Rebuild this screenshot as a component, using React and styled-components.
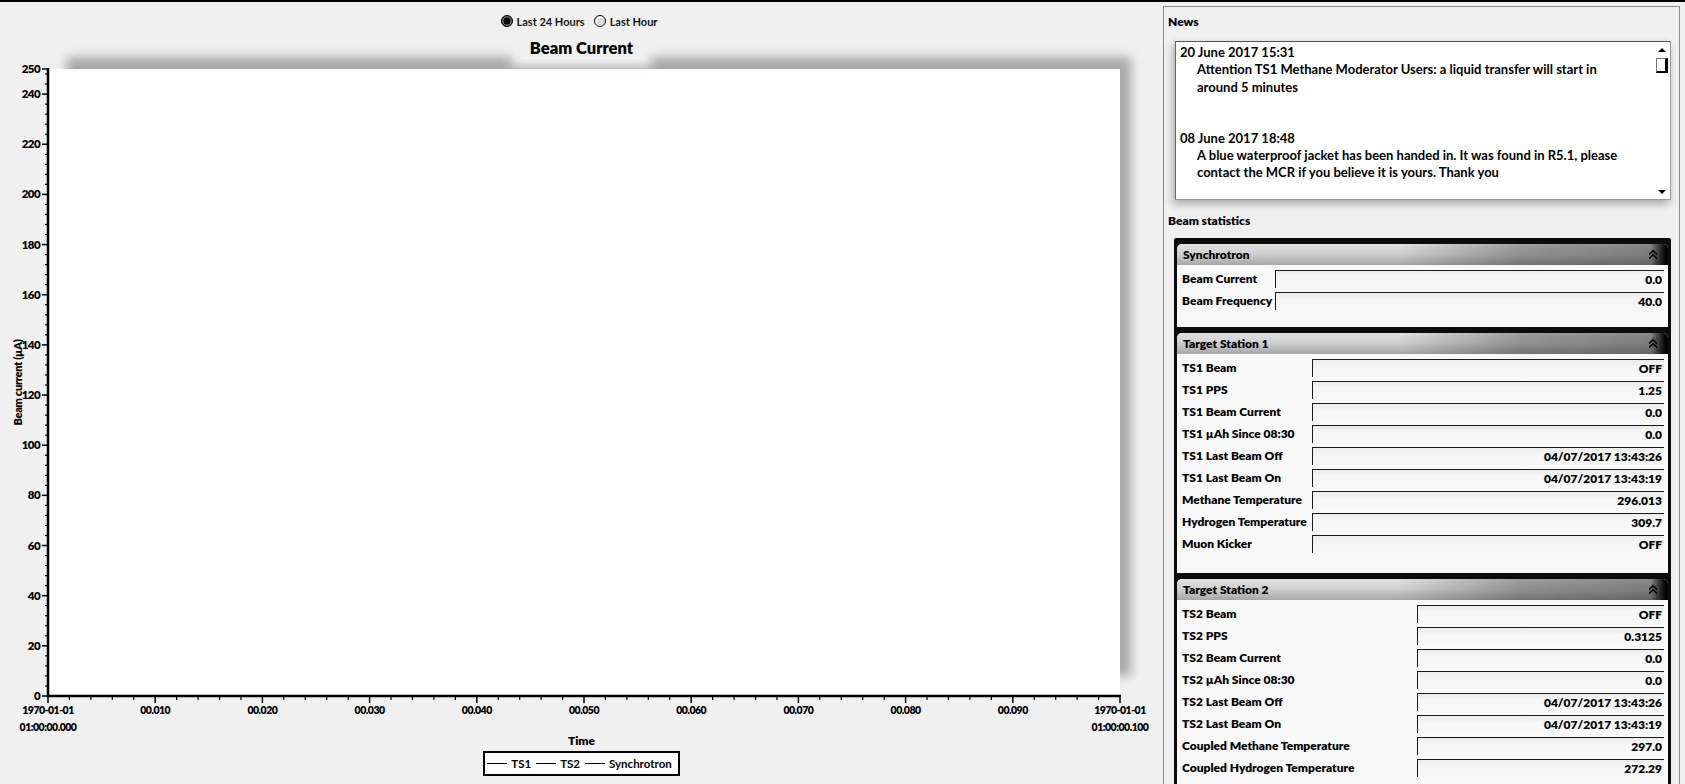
import React from 'react';
import styled, { createGlobalStyle } from 'styled-components';

const GlobalStyle = createGlobalStyle`
  html, body { margin: 0; padding: 0; background: #f0f0f0; }
  body { font-family: Lato, "Noto Sans", sans-serif; color: #000; }
  * { box-sizing: border-box; }
`;

const Window = styled.div`
  width: 1685px;
  height: 784px;
  border-top: 2px solid #000;
  display: flex;
  overflow: hidden;
  background: #f0f0f0;
`;

const ChartArea = styled.div`
  width: 1163px;
  flex: none;
  display: flex;
  flex-direction: column;
  align-items: center;
  padding-top: 11px;
`;

const RadioRow = styled.div`
  display: flex;
  align-items: center;
  height: 16px;
  gap: 4px;
  font-size: 11px;
  font-weight: 700;
`;

const RadioLabel = styled.label`
  display: flex;
  align-items: center;
  gap: 4px;
  margin-right: 5px;
`;

const RadioDot = styled.span`
  width: 12px;
  height: 12px;
  border-radius: 50%;
  border: 1.5px solid #000;
  background: ${(p) => (p.$checked ? '#000' : '#d8d8d8')};
  box-shadow: ${(p) => (p.$checked ? 'inset 0 0 0 1.5px #777' : 'inset 1px 1px 0 1px #fff')};
`;

const Title = styled.div`
  position: relative;
  z-index: 1;
  margin-top: 9px;
  margin-bottom: 10px;
  padding: 0 10px;
  font-size: 16.5px;
  font-weight: 800;
  line-height: 21px;
  background: #f0f0f0;
  box-shadow: 0 0 10px 8px #f0f0f0;
`;

const PlotRow = styled.div`
  position: relative;
  align-self: stretch;
  height: 665px;
`;

const PlotBox = styled.div`
  margin-left: 48px;
  width: 1072px;
  height: 627px;
  background: #fff;
  box-shadow: 15px -16px 10px -4px rgba(0, 0, 0, 0.3);
`;

const AxisSvg = styled.svg`
  position: absolute;
  left: 0;
  top: 0;
  overflow: visible;
  font-family: Lato, "Noto Sans", sans-serif;
  font-weight: 800;
`;

const AxisTitle = styled.div`
  font-size: 12px;
  font-weight: 800;
  line-height: 14px;
`;

const Legend = styled.div`
  margin-top: 3px;
  height: 25px;
  display: flex;
  align-items: center;
  gap: 5px;
  padding: 0 6px 0 2px;
  border: 2px solid #000;
  background: #fff;
  font-size: 11.5px;
  font-weight: 700;
`;

const LegendItem = styled.span`
  display: flex;
  align-items: center;
  gap: 4px;
  &::before {
    content: '';
    width: 20px;
    height: 1px;
    background: #000;
  }
`;

const SidePanel = styled.div`
  flex: none;
  width: 517px;
  margin-top: 4px;
  border: 1px solid #8a8a8a;
  border-bottom: none;
  padding-top: 7px;
  display: flex;
  flex-direction: column;
`;

const SectionLabel = styled.div`
  margin-left: 4px;
  margin-top: ${(p) => p.$mt || 0}px;
  font-size: 12px;
  font-weight: 800;
  line-height: 15px;
`;

const NewsBox = styled.div`
  margin: 12px 0 0 11px;
  width: 496px;
  height: 159px;
  flex: none;
  display: flex;
  background: #fff;
  border: 1px solid #9a9a9a;
  border-top-color: #555;
  border-left-color: #666;
  box-shadow: -2px 4px 8px rgba(0, 0, 0, 0.3);
`;

const NewsContent = styled.div`
  flex: 1;
  padding: 2px 4px;
  font-size: 13px;
  font-weight: 700;
  line-height: 17.3px;
  overflow: hidden;
`;

const NewsEntry = styled.div`
  margin-bottom: 34px;
`;

const NewsBody = styled.div`
  padding-left: 17px;
`;

const ScrollBar = styled.div`
  width: 16px;
  display: flex;
  flex-direction: column;
  align-items: center;
  padding: 6px 0 5px;
`;

const Arrow = styled.span`
  width: 0;
  height: 0;
  border-left: 4px solid transparent;
  border-right: 4px solid transparent;
  ${(p) => (p.$down ? 'border-top: 4px solid #000;' : 'border-bottom: 4px solid #000;')}
  margin-top: ${(p) => (p.$down ? 'auto' : '0')};
`;

const Thumb = styled.span`
  margin-top: 6px;
  width: 12px;
  height: 15px;
  background: #fff;
  border: 1px solid #777;
  border-right: 3px solid #000;
  border-bottom: 2px solid #000;
`;

const StatsFrame = styled.div`
  margin: 10px 0 0 10px;
  width: 497px;
  flex: 1;
  background: #0c0c0c;
  padding: 6px 3px 0 3px;
  display: flex;
  flex-direction: column;
  gap: 6px;
  border-radius: 2px 2px 0 0;
`;

const Group = styled.div`
  background: #f8f8f8;
  border-radius: 5px 5px 0 0;
  flex: none;
`;

const GroupHeader = styled.div`
  height: 21px;
  display: flex;
  align-items: center;
  justify-content: space-between;
  padding: 0 10px 0 6px;
  font-size: 12px;
  font-weight: 800;
  border-radius: 5px 5px 0 0;
  background:
    linear-gradient(to right, rgba(0,0,0,0) 0%, rgba(0,0,0,0) 45%, rgba(0,0,0,0.3) 70%, rgba(0,0,0,0.4) 96.5%, #000 99.5%),
    linear-gradient(to bottom, #e2e2e2 0%, #cdcdcd 50%, #a6a6a6 100%);
`;

const GroupBody = styled.div`
  display: grid;
  grid-template-columns: ${(p) => p.$labelWidth}px 1fr;
  row-gap: 4px;
  align-items: center;
  padding: 5px 4px ${(p) => p.$pb}px 5px;
`;

const RowLabel = styled.div`
  font-size: 12px;
  font-weight: 800;
  white-space: nowrap;
  line-height: 18px;
`;

const ValueBox = styled.div`
  height: 18px;
  text-align: right;
  padding-right: 2px;
  font-size: 12px;
  font-weight: 800;
  line-height: 18px;
  background: linear-gradient(to bottom, #ececec, #f7f7f7 40%);
  border-top: 1px solid #1a1a1a;
  border-left: 1px solid #1a1a1a;
`;

const ChevronIcon = () => (
  <svg width="10" height="11" viewBox="0 0 10 11">
    <path d="M1 4.5 L5 0.5 L9 4.5 L9 6.5 L5 3 L1 6.5 Z" fill="#000" />
    <path d="M1 8.5 L5 4.5 L9 8.5 L9 10.5 L5 7 L1 10.5 Z" fill="#000" />
  </svg>
);

const PX0 = 48;
const PX1 = 1120;
const PH = 627;

function ChartAxes() {
  const yTicks = [];
  for (let v = 0; v <= 250; v += 2) {
    const major = v % 20 === 0 || v === 250;
    const minor = v % 4 === 0;
    if (!major && !minor) continue;
    const y = PH - (v * PH) / 250;
    yTicks.push(
      <line key={'yt' + v} x1={major ? 42 : 45} x2={PX0} y1={y} y2={y} stroke="#000" strokeWidth={major ? 1.5 : 1.2} />
    );
    if (major) {
      yTicks.push(
        <text key={'yl' + v} x={40} y={y + 4} fontSize="11.5" textAnchor="end" letterSpacing="-0.6">
          {v}
        </text>
      );
    }
  }
  const xTicks = [];
  const W = PX1 - PX0;
  for (let i = 0; i <= 50; i++) {
    const x = PX0 + (i * W) / 50;
    const major = i % 5 === 0;
    xTicks.push(
      <line key={'xt' + i} x1={x} x2={x} y1={PH} y2={PH + (major ? 7 : 4)} stroke="#000" strokeWidth={major ? 1.5 : 1.2} />
    );
    if (major) {
      const n = i / 5;
      if (n === 0 || n === 10) {
        xTicks.push(
          <text key={'xl' + i} x={x} fontSize="10.5" textAnchor="middle" letterSpacing="-0.5">
            <tspan x={x} y={PH + 18}>1970-01-01</tspan>
            <tspan x={x} y={PH + 35}>{n === 0 ? '01:00:00.000' : '01:00:00.100'}</tspan>
          </text>
        );
      } else {
        xTicks.push(
          <text key={'xl' + i} x={x} y={PH + 18} fontSize="10.5" textAnchor="middle" letterSpacing="-0.5">
            {'00.0' + n + '0'}
          </text>
        );
      }
    }
  }
  return (
    <AxisSvg width="1163" height="665" viewBox="0 0 1163 665">
      <line x1={PX0} x2={PX0} y1={-1} y2={PH + 1} stroke="#000" strokeWidth="2.5" />
      <line x1={PX0 - 1} x2={PX1 + 1} y1={PH} y2={PH} stroke="#000" strokeWidth="2.5" />
      {yTicks}
      {xTicks}
      <text
        x={0}
        y={0}
        transform={`translate(22 ${PH / 2}) rotate(-90)`}
        fontSize="11"
        textAnchor="middle"
        letterSpacing="-0.3"
      >
        Beam current (µA)
      </text>
    </AxisSvg>
  );
}

const groups = [
  {
    title: 'Synchrotron',
    labelWidth: 93,
    pb: 17,
    rows: [
      ['Beam Current', '0.0'],
      ['Beam Frequency', '40.0'],
    ],
  },
  {
    title: 'Target Station 1',
    labelWidth: 130,
    pb: 20,
    rows: [
      ['TS1 Beam', 'OFF'],
      ['TS1 PPS', '1.25'],
      ['TS1 Beam Current', '0.0'],
      ['TS1 µAh Since 08:30', '0.0'],
      ['TS1 Last Beam Off', '04/07/2017 13:43:26'],
      ['TS1 Last Beam On', '04/07/2017 13:43:19'],
      ['Methane Temperature', '296.013'],
      ['Hydrogen Temperature', '309.7'],
      ['Muon Kicker', 'OFF'],
    ],
  },
  {
    title: 'Target Station 2',
    labelWidth: 235,
    pb: 18,
    rows: [
      ['TS2 Beam', 'OFF'],
      ['TS2 PPS', '0.3125'],
      ['TS2 Beam Current', '0.0'],
      ['TS2 µAh Since 08:30', '0.0'],
      ['TS2 Last Beam Off', '04/07/2017 13:43:26'],
      ['TS2 Last Beam On', '04/07/2017 13:43:19'],
      ['Coupled Methane Temperature', '297.0'],
      ['Coupled Hydrogen Temperature', '272.29'],
    ],
  },
];

export default function App() {
  return (
    <>
      <GlobalStyle />
      <Window>
        <ChartArea>
          <RadioRow>
            <RadioLabel>
              <RadioDot $checked />
              Last 24 Hours
            </RadioLabel>
            <RadioLabel>
              <RadioDot />
              Last Hour
            </RadioLabel>
          </RadioRow>
          <Title>Beam Current</Title>
          <PlotRow>
            <PlotBox />
            <ChartAxes />
          </PlotRow>
          <AxisTitle>Time</AxisTitle>
          <Legend>
            <LegendItem>TS1</LegendItem>
            <LegendItem>TS2</LegendItem>
            <LegendItem>Synchrotron</LegendItem>
          </Legend>
        </ChartArea>
        <SidePanel>
          <SectionLabel>News</SectionLabel>
          <NewsBox>
            <NewsContent>
              <NewsEntry>
                <div>20 June 2017 15:31</div>
                <NewsBody>
                  Attention TS1 Methane Moderator Users: a liquid transfer will start in
                  <br />
                  around 5 minutes
                </NewsBody>
              </NewsEntry>
              <NewsEntry>
                <div>08 June 2017 18:48</div>
                <NewsBody>
                  A blue waterproof jacket has been handed in. It was found in R5.1, please
                  <br />
                  contact the MCR if you believe it is yours. Thank you
                </NewsBody>
              </NewsEntry>
            </NewsContent>
            <ScrollBar>
              <Arrow />
              <Thumb />
              <Arrow $down />
            </ScrollBar>
          </NewsBox>
          <SectionLabel $mt={13}>Beam statistics</SectionLabel>
          <StatsFrame>
            {groups.map((g) => (
              <Group key={g.title}>
                <GroupHeader>
                  <span>{g.title}</span>
                  <ChevronIcon />
                </GroupHeader>
                <GroupBody $labelWidth={g.labelWidth} $pb={g.pb}>
                  {g.rows.map(([label, value]) => (
                    <React.Fragment key={label}>
                      <RowLabel>{label}</RowLabel>
                      <ValueBox>{value}</ValueBox>
                    </React.Fragment>
                  ))}
                </GroupBody>
              </Group>
            ))}
          </StatsFrame>
        </SidePanel>
      </Window>
    </>
  );
}
